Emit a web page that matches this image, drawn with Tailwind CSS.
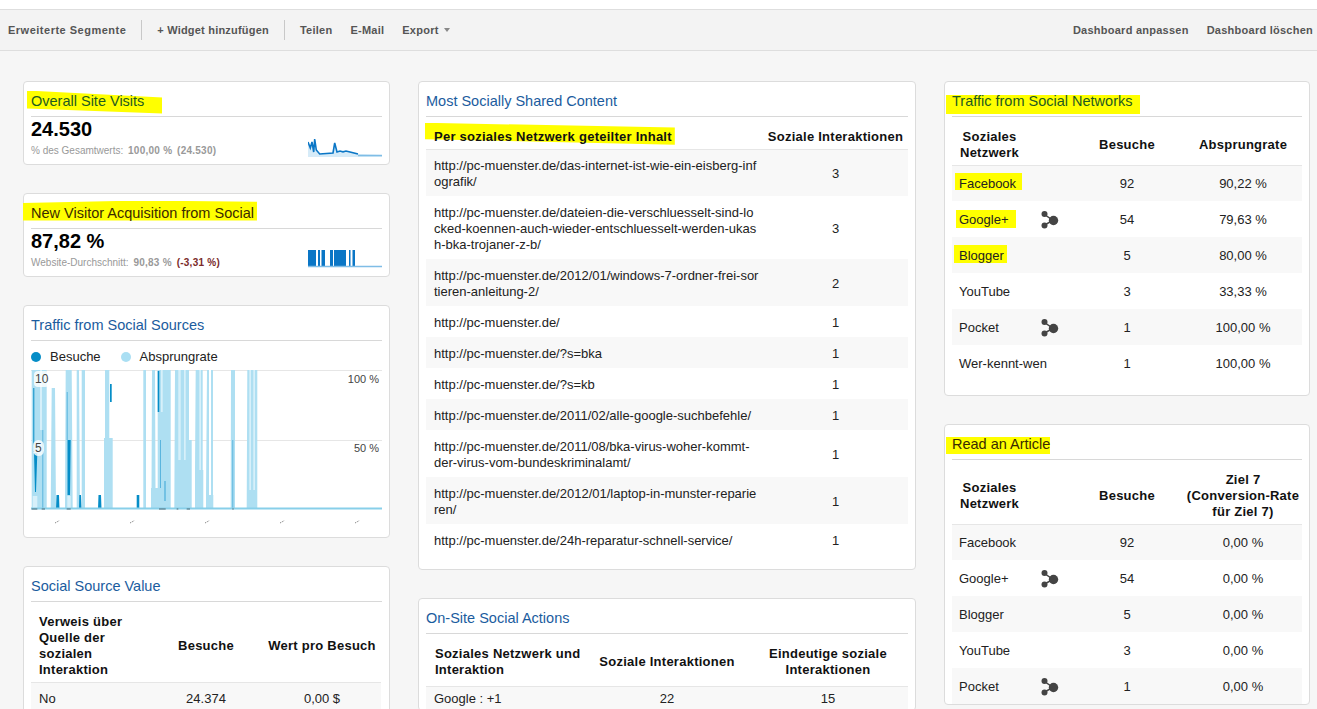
<!DOCTYPE html>
<html lang="de">
<head>
<meta charset="utf-8">
<script src="https://cdn.jsdelivr.net/npm/@tailwindcss/browser@4"></script>
</head>
<body class="h-[709px] w-[1317px] overflow-hidden bg-[#f6f6f6] font-['Liberation_Sans',Arial,sans-serif] text-[13px] leading-4 text-[#222]">
<div class="h-[10px] border-b border-[#dedede] bg-white"></div>
<div class="flex h-[41px] items-center justify-between border-b border-[#dedede] bg-[#f3f3f3] pb-px pl-2 pr-1 text-[11px] font-bold tracking-[0.25px] text-[#555]">
  <div class="flex items-center">
    <span class="tracking-[0.5px]">Erweiterte Segmente</span>
    <span class="ml-[15px] h-5 w-px bg-[#c8c8c8]"></span>
    <span class="ml-[15px] tracking-[0.2px]">+ Widget hinzufügen</span>
    <span class="ml-[15px] h-5 w-px bg-[#c8c8c8]"></span>
    <span class="ml-[15px]">Teilen</span>
    <span class="ml-[18px]">E-Mail</span>
    <span class="ml-[18px]">Export</span>
    <span class="ml-[5px] mt-px h-0 w-0 border-x-[3.5px] border-t-[4px] border-x-transparent border-t-[#888]"></span>
  </div>
  <div class="flex items-center gap-[18px]">
    <span>Dashboard anpassen</span>
    <span>Dashboard löschen</span>
  </div>
</div>

<div class="flex items-start pl-[23px] pt-[30px]">
  <!-- left column -->
  <div class="flex w-[367px] flex-col gap-[28px]">
    <section class="h-[84px] rounded border border-[#dcdcdc] bg-white pl-[7px] pr-[7px]">
      <h2 class="flex h-[35px] items-center border-b border-[#d8d8d8] pt-[3px] text-[14.5px] font-normal"><span class="relative z-0 text-[#1e5a20]"><span class="absolute -left-1 -right-[18px] -top-[2px] -bottom-[5px] -z-10 bg-[#ffff00] [clip-path:polygon(0_0,100%_30%,100%_100%,0_78%)]"></span>Overall Site Visits</span></h2>
      <div class="flex h-[47px] items-end justify-between">
        <div class="self-start">
          <div class="text-[20px] font-bold leading-6 text-black">24.530</div>
          <div class="mt-[4px] text-[10px] leading-3 text-[#999]">% des Gesamtwerts: <b class="ml-[2px] tracking-[0.25px]">100,00 %</b> <b class="ml-[2px] tracking-[0.25px]">(24.530)</b></div>
        </div>
        <svg class="mb-[7px] h-5 w-[74px]" viewBox="0 0 74 20"><path d="M0 5 2.300 11 4 5 5.700 15 6.700 2 8.300 13 11.700 17 25 16 26.700 6 29 15 35 13 42 15 50 17 74 18V20H0Z" fill="#d6ebf8"/><path d="M0 5 2.300 11 4 5 5.700 15 6.700 2 8.300 13 11.700 17 25 16 26.700 6 29 15 32 14 35 15 38 14 42 15 50 17" fill="none" stroke="#0a76c6" stroke-width="1.600"/><path d="M50 18.500H74" stroke="#7fbde6" stroke-width="1.500"/></svg>
      </div>
    </section>
    <section class="h-[84px] rounded border border-[#dcdcdc] bg-white pl-[7px] pr-[7px]">
      <h2 class="flex h-[35px] items-center border-b border-[#d8d8d8] pt-[3px] text-[14.5px] font-normal"><span class="relative z-0 text-[#3a2a00]"><span class="absolute -left-2 -right-[3px] -top-[4px] bottom-0 -z-10 bg-[#ffff00] [clip-path:polygon(0_12%,50%_0,100%_6%,100%_100%,0_100%)]"></span>New Visitor Acquisition from Social</span></h2>
      <div class="flex h-[47px] items-end justify-between">
        <div class="self-start">
          <div class="text-[20px] font-bold leading-6 text-black">87,82 %</div>
          <div class="mt-[4px] text-[10px] leading-3 text-[#999]">Website-Durchschnitt: <b class="ml-[2px] tracking-[0.25px]">90,83 %</b> <b class="ml-[2px] tracking-[0.25px] text-[#7a2a2a]">(-3,31 %)</b></div>
        </div>
        <svg class="mb-[8px] h-[18px] w-[74px]" viewBox="0 0 74 18"><path d="M0 0H8V16H0ZM10 0H12V16H10ZM13.500 0H17V16H13.500ZM22 0H25V16H22ZM26 0H38V16H26ZM41 0H42.500V16H41ZM44.500 0H47V16H44.500Z" fill="#0a76c6"/><path d="M0 16.500H74" stroke="#7fbde6" stroke-width="1.500"/></svg>
      </div>
    </section>
    <section class="h-[233px] rounded border border-[#dcdcdc] bg-white pl-[7px] pr-[7px]">
      <h2 class="flex h-[35px] items-center border-b border-[#d8d8d8] pt-[3px] text-[14.5px] font-normal text-[#1b5c9e]">Traffic from Social Sources</h2>
      <div class="flex h-[29px] items-center pt-[3px]">
        <span class="h-[10px] w-[10px] rounded-full bg-[#058dc7]"></span><span class="ml-[9px]">Besuche</span>
        <span class="ml-[20px] h-[10px] w-[10px] rounded-full bg-[#aadff3]"></span><span class="ml-[9px]">Absprungrate</span>
      </div>
      <div class="relative h-[155px] w-[351px]">
        <svg class="block" width="351" height="155" viewBox="0 0 351 155">
          <path d="M0 .5H351M0 70.500H351" stroke="#e6e6e6"/>
          <path fill="#aedff2" d="M.700 0H15.700V139H.700ZM20.700 18H24L25 139H19.700ZM34.700 0H40.700L41.700 139H34ZM45.700 0H48L49 139H45.700ZM50.700 0H54V139H50.700ZM74 0H78.300V68H81.700V139H73V68H74ZM112.300 0H115V139H112.300ZM121 0H124L124.500 118H120.500ZM126.700 0H139.700V139H120V118H126.700ZM144 0H158V70H160.700V139H143.300ZM164.700 0H171.700V100H172.300V139H164V100ZM176 0H182V125H182.300V139H175V125ZM200 0H204V139H199.700ZM216.300 0H226.300V139H215.700Z"/>
          <path fill="#d7f0fa" d="M9 0H11V60H9ZM130 0H131.700V42H130ZM147.300 0H149.700V90H147.300ZM153 0H154.700V90H153ZM168.300 0H170V100H168.300ZM218.300 0H220V120H218.300ZM222.300 0H224V120H222.300ZM1.700 126H6.300V139H1.700ZM36.300 126H39.700V139H36.300Z"/>
          <path fill="#fff" d="M178 0H180V125H178Z"/>
          <path fill="#058dc7" d="M2.300 18H3.300V82H2.300ZM3 83H6.300L5 122H4ZM25.500 125H28L28.500 139H25ZM36.500 70H39.700L39 125H36.500ZM48.300 125H50L50.500 139H48ZM67.500 125H70L70.500 139H67ZM79 14H80.700V32H79ZM105.700 125H108.300V139H105.700ZM126.700 1H128.300V42H126.700Z"/>
          <path fill="#5bb5de" d="M11.300 60H12.300V139H11.300ZM35.700 22H36.700V70H35.700ZM129 70H130V118H129ZM133.300 111H134.700V131H133.300ZM201.300 70H202.300V139H201.300Z"/>
          <path d="M0 138.500H351" stroke="#88cfe9" stroke-width="2"/>
          <path d="M.700 139H6.300M10.700 139H14M35.700 139H39.700M128 139H134.700M145.700 139H147.300M155.700 139H159M201.300 139H202.700" stroke="#4a6a78" stroke-width="1"/>
          <g stroke="#888" stroke-width="1" stroke-dasharray="1.500 1"><path d="M24 153 28.500 150.500"/><path d="M99 153 103.500 150.500"/><path d="M174 153 178.500 150.500"/><path d="M249 153 253.500 150.500"/><path d="M324 153 328.500 150.500"/></g>
        </svg>
        <span class="absolute left-[3px] top-[1px] rounded-sm bg-white/80 px-px text-[12px] text-[#444]">10</span>
        <span class="absolute left-[2px] top-[70px] rounded-full bg-white/80 px-[2px] text-[12px] text-[#444]">5</span>
        <span class="absolute right-[3px] top-[1px] text-[11px] text-[#444]">100 %</span>
        <span class="absolute right-[3px] top-[70px] text-[11px] text-[#444]">50 %</span>
      </div>
    </section>
    <section class="rounded border border-[#dcdcdc] bg-white pl-[7px] pr-[7px]">
      <h2 class="flex h-[35px] items-center border-b border-[#d8d8d8] pt-[3px] text-[14.5px] font-normal text-[#1b5c9e]">Social Source Value</h2>
      <table class="w-[350px] table-fixed border-collapse">
        <colgroup><col class="w-[118px]"><col class="w-[114px]"><col class="w-[118px]"></colgroup>
        <thead class="tracking-[0.25px] text-[#111]"><tr class="h-[80px] border-b border-[#e6e6e6]"><th class="pl-2 pt-2 text-left font-bold">Verweis über Quelle der sozialen Interaktion</th><th class="pt-2 font-bold">Besuche</th><th class="pt-2 font-bold">Wert pro Besuch</th></tr></thead>
        <tbody class="text-center [&_td]:pt-[2px]"><tr class="h-8 bg-[#f8f8f8]"><td class="pl-2 text-left">No</td><td>24.374</td><td>0,00 $</td></tr></tbody>
      </table>
    </section>
  </div>

  <!-- centre column -->
  <div class="ml-[28px] flex w-[498px] flex-col gap-[28px]">
    <section class="h-[489px] rounded border border-[#dcdcdc] bg-white pl-[7px] pr-[7px]">
      <h2 class="flex h-[35px] items-center border-b border-[#d8d8d8] pt-[3px] text-[14.5px] font-normal text-[#1b5c9e]">Most Socially Shared Content</h2>
      <table class="w-[482px] table-fixed border-collapse">
        <colgroup><col class="w-[337px]"><col></colgroup>
        <thead class="tracking-[0.25px] text-[#111]"><tr class="h-[32px] border-b border-[#e6e6e6]"><th class="pl-2 pt-2 text-left font-bold"><span class="relative z-0"><span class="absolute -left-[9px] -right-[3px] -top-[6px] -bottom-[1px] -z-10 bg-[#ffff00] [clip-path:polygon(0_0,100%_22%,100%_100%,0_75%)]"></span>Per soziales Netzwerk geteilter Inhalt</span></th><th class="pt-2 font-bold">Soziale Interaktionen</th></tr></thead>
        <tbody class="text-center [&_td]:pt-[2px]">
          <tr class="h-[47px] bg-[#f8f8f8]"><td class="pl-2 pr-[6px] text-left break-all">http://pc-muenster.de/das-internet-ist-wie-ein-eisberg-infografik/</td><td>3</td></tr>
          <tr class="h-[63px]"><td class="pl-2 pr-[6px] text-left break-all">http://pc-muenster.de/dateien-die-verschluesselt-sind-locked-koennen-auch-wieder-entschluesselt-werden-ukash-bka-trojaner-z-b/</td><td>3</td></tr>
          <tr class="h-[47px] bg-[#f8f8f8]"><td class="pl-2 pr-[3px] text-left break-all">http://pc-muenster.de/2012/01/windows-7-ordner-frei-sortieren-anleitung-2/</td><td>2</td></tr>
          <tr class="h-[31px]"><td class="pl-2 text-left">http://pc-muenster.de/</td><td>1</td></tr>
          <tr class="h-[31px] bg-[#f8f8f8]"><td class="pl-2 text-left">http://pc-muenster.de/?s=bka</td><td>1</td></tr>
          <tr class="h-[31px]"><td class="pl-2 text-left">http://pc-muenster.de/?s=kb</td><td>1</td></tr>
          <tr class="h-[31px] bg-[#f8f8f8]"><td class="pl-2 text-left">http://pc-muenster.de/2011/02/alle-google-suchbefehle/</td><td>1</td></tr>
          <tr class="h-[47px]"><td class="pl-2 pr-[6px] text-left">http://pc-muenster.de/2011/08/bka-virus-woher-kommt-der-virus-vom-bundeskriminalamt/</td><td>1</td></tr>
          <tr class="h-[47px] bg-[#f8f8f8]"><td class="pl-2 pr-[6px] text-left break-all">http://pc-muenster.de/2012/01/laptop-in-munster-reparieren/</td><td>1</td></tr>
          <tr class="h-[31px]"><td class="pl-2 text-left">http://pc-muenster.de/24h-reparatur-schnell-service/</td><td>1</td></tr>
        </tbody>
      </table>
    </section>
    <section class="rounded border border-[#dcdcdc] bg-white pl-[7px] pr-[7px]">
      <h2 class="flex h-[35px] items-center border-b border-[#d8d8d8] pt-[3px] text-[14.5px] font-normal text-[#1b5c9e]">On-Site Social Actions</h2>
      <table class="w-[482px] table-fixed border-collapse">
        <colgroup><col class="w-[160px]"><col class="w-[162px]"><col class="w-[160px]"></colgroup>
        <thead class="tracking-[0.25px] text-[#111]"><tr class="h-[52px] border-b border-[#e6e6e6]"><th class="pl-[9px] pt-1 text-left font-bold">Soziales Netzwerk und Interaktion</th><th class="pt-1 font-bold">Soziale Interaktionen</th><th class="pt-1 font-bold">Eindeutige soziale Interaktionen</th></tr></thead>
        <tbody class="text-center [&_td]:pt-[2px]"><tr class="h-6 bg-[#f8f8f8]"><td class="pl-2 text-left">Google : +1</td><td>22</td><td>15</td></tr></tbody>
      </table>
    </section>
  </div>

  <!-- right column -->
  <div class="ml-[28px] flex w-[366px] flex-col gap-[28px]">
    <section class="h-[315px] rounded border border-[#dcdcdc] bg-white pl-[7px] pr-[7px]">
      <h2 class="flex h-[35px] items-center border-b border-[#d8d8d8] pt-[3px] text-[14.5px] font-normal"><span class="relative z-0 text-[#1e5a20]"><span class="absolute -left-[6px] -right-[7px] top-[2px] -bottom-[5px] -z-10 bg-[#ffff00]"></span>Traffic from Social Networks</span></h2>
      <table class="w-[350px] table-fixed border-collapse">
        <colgroup><col class="w-[118px]"><col class="w-[114px]"><col class="w-[118px]"></colgroup>
        <thead class="tracking-[0.25px] text-[#111]"><tr class="h-[48px] border-b border-[#e6e6e6]"><th class="pl-2 pt-2 text-left font-bold"><span class="inline-block text-center">Soziales<br>Netzwerk</span></th><th class="pt-2 font-bold">Besuche</th><th class="pt-2 font-bold">Absprungrate</th></tr></thead>
        <tbody class="text-center [&_td]:pt-[2px]">
          <tr class="h-9 bg-[#f8f8f8]"><td class="pl-[7px] text-left"><span class="relative z-0"><span class="absolute -left-1 -right-[6px] -top-[3px] bottom-[1px] -z-10 bg-[#ffff00]"></span>Facebook</span></td><td>92</td><td>90,22 %</td></tr>
          <tr class="h-9"><td class="pl-[7px] text-left"><div class="flex items-center justify-between pr-[11px]"><span class="relative z-0"><span class="absolute -left-[3px] -right-[7px] -top-[2px] bottom-0 -z-10 bg-[#ffff00]"></span>Google+</span><svg class="h-[20px] w-[18px]" viewBox="0 0 18 20"><path d="M3.500 4.500 12 10.500 3.500 15" fill="none" stroke="#444" stroke-width="1.500"/><circle cx="3.500" cy="4" r="3" fill="#444"/><circle cx="3.500" cy="15.500" r="3" fill="#444"/><circle cx="12.500" cy="10.500" r="4.700" fill="#444"/></svg></div></td><td>54</td><td>79,63 %</td></tr>
          <tr class="h-9 bg-[#f8f8f8]"><td class="pl-[7px] text-left"><span class="relative z-0"><span class="absolute -left-[5px] -right-[3px] -top-[3px] bottom-0 -z-10 bg-[#ffff00]"></span>Blogger</span></td><td>5</td><td>80,00 %</td></tr>
          <tr class="h-9"><td class="pl-[7px] text-left">YouTube</td><td>3</td><td>33,33 %</td></tr>
          <tr class="h-9 bg-[#f8f8f8]"><td class="pl-[7px] text-left"><div class="flex items-center justify-between pr-[11px]"><span>Pocket</span><svg class="h-[20px] w-[18px]" viewBox="0 0 18 20"><path d="M3.500 4.500 12 10.500 3.500 15" fill="none" stroke="#444" stroke-width="1.500"/><circle cx="3.500" cy="4" r="3" fill="#444"/><circle cx="3.500" cy="15.500" r="3" fill="#444"/><circle cx="12.500" cy="10.500" r="4.700" fill="#444"/></svg></div></td><td>1</td><td>100,00 %</td></tr>
          <tr class="h-9"><td class="pl-[7px] text-left">Wer-kennt-wen</td><td>1</td><td>100,00 %</td></tr>
        </tbody>
      </table>
    </section>
    <section class="rounded border border-[#dcdcdc] bg-white pl-[7px] pr-[7px]">
      <h2 class="flex h-[35px] items-center border-b border-[#d8d8d8] pt-[3px] text-[14.5px] font-normal"><span class="relative z-0 text-[#3a2a00]"><span class="absolute -left-[6px] right-0 top-[1px] -bottom-[2px] -z-10 bg-[#ffff00]"></span>Read an Article</span></h2>
      <table class="w-[350px] table-fixed border-collapse">
        <colgroup><col class="w-[118px]"><col class="w-[114px]"><col class="w-[118px]"></colgroup>
        <thead class="tracking-[0.25px] text-[#111]"><tr class="h-[64px] border-b border-[#e6e6e6]"><th class="pl-2 pt-2 text-left font-bold"><span class="inline-block text-center">Soziales<br>Netzwerk</span></th><th class="pt-2 font-bold">Besuche</th><th class="pt-2 font-bold">Ziel 7<br>(Conversion-Rate<br>für Ziel 7)</th></tr></thead>
        <tbody class="text-center [&_td]:pt-[2px]">
          <tr class="h-9 bg-[#f8f8f8]"><td class="pl-[7px] text-left">Facebook</td><td>92</td><td>0,00 %</td></tr>
          <tr class="h-9"><td class="pl-[7px] text-left"><div class="flex items-center justify-between pr-[11px]"><span>Google+</span><svg class="h-[20px] w-[18px]" viewBox="0 0 18 20"><path d="M3.500 4.500 12 10.500 3.500 15" fill="none" stroke="#444" stroke-width="1.500"/><circle cx="3.500" cy="4" r="3" fill="#444"/><circle cx="3.500" cy="15.500" r="3" fill="#444"/><circle cx="12.500" cy="10.500" r="4.700" fill="#444"/></svg></div></td><td>54</td><td>0,00 %</td></tr>
          <tr class="h-9 bg-[#f8f8f8]"><td class="pl-[7px] text-left">Blogger</td><td>5</td><td>0,00 %</td></tr>
          <tr class="h-9"><td class="pl-[7px] text-left">YouTube</td><td>3</td><td>0,00 %</td></tr>
          <tr class="h-9 bg-[#f8f8f8]"><td class="pl-[7px] text-left"><div class="flex items-center justify-between pr-[11px]"><span>Pocket</span><svg class="h-[20px] w-[18px]" viewBox="0 0 18 20"><path d="M3.500 4.500 12 10.500 3.500 15" fill="none" stroke="#444" stroke-width="1.500"/><circle cx="3.500" cy="4" r="3" fill="#444"/><circle cx="3.500" cy="15.500" r="3" fill="#444"/><circle cx="12.500" cy="10.500" r="4.700" fill="#444"/></svg></div></td><td>1</td><td>0,00 %</td></tr>
        </tbody>
      </table>
    </section>
  </div>
</div>
</body>
</html>
